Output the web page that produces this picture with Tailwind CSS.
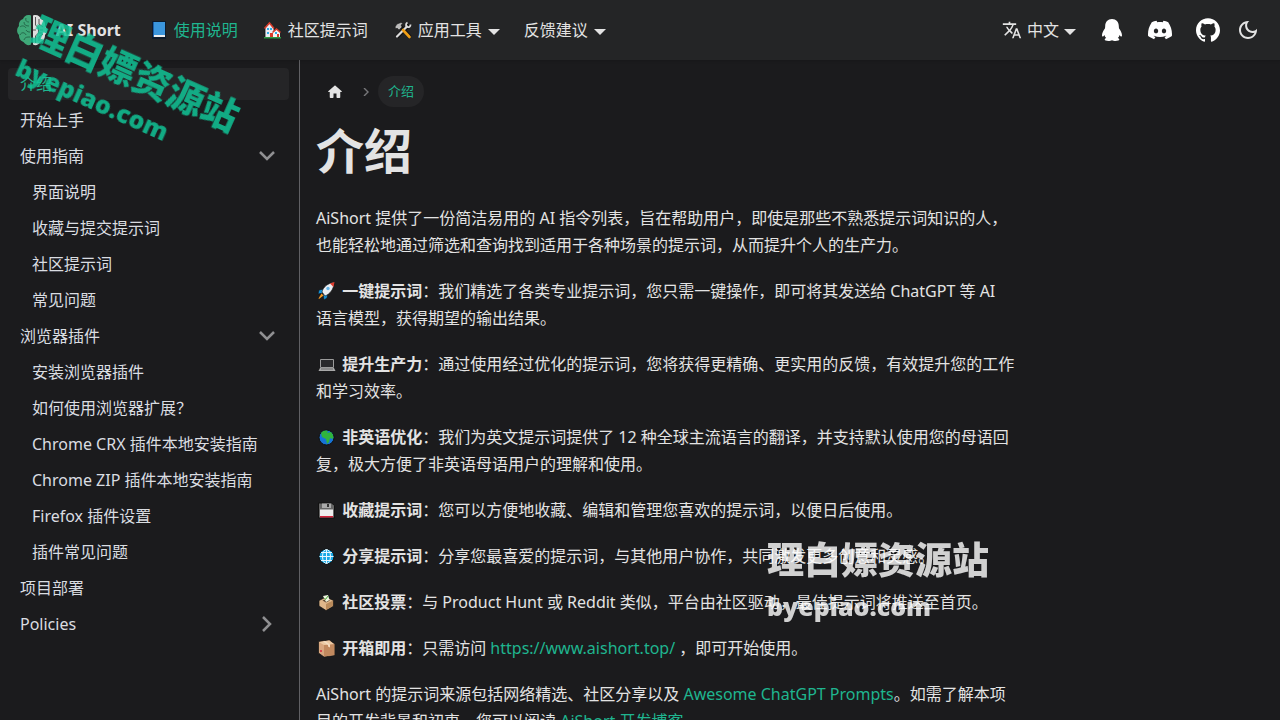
<!DOCTYPE html>
<html lang="zh-CN">
<head>
<meta charset="utf-8" />
<meta name="viewport" content="width=device-width, initial-scale=1" />
<title>介绍 | AI Short</title>
<script src="https://cdn.jsdelivr.net/npm/@tailwindcss/browser@4"></script>
</head>
<body class="bg-[#1b1b1d] font-['Noto_Sans','Noto_Sans_CJK_SC',sans-serif] text-base text-[#e3e3e3]">

<!-- navbar -->
<nav class="sticky top-0 z-20 flex h-[60px] items-center justify-between bg-[#242526] px-4 shadow-sm">
  <div class="flex items-center">
    <a href="#" class="mr-[15px] flex items-center gap-2 font-bold">
      <svg class="size-8" viewBox="0 0 32 32" aria-hidden="true">
        <path fill="#3fa878" d="M15 1.500C11 0 8 2 7 5 4 6 2.500 9 3 12 .5 14 .5 19 3 21c0 4 2 6 4.500 7 2 3 5 4 7.500 2.500z"/>
        <path fill="none" stroke="#256a4b" d="M10 4c-1 3 1 4 3 4M4 13c2-2 5-1 6 1m-6 7c1-3 5-3 6 0m-2 5c1-3 3-3 6-3M8 8c0 3 2 4 5 4m-3 4c1 2 3 2 4 2"/>
        <path fill="#dedede" d="M17 1.500C21 0 24 2 25 5c3 1 4.500 4 4 7 2.500 2 2.500 7 0 9 0 4-2 6-4.500 7-2 3-5 4-7.500 2.500z"/>
        <path fill="none" stroke="#555" d="M19.500 3v8l3 3v5l-3 3v7M23 5v5l4 3m-1 6h-3m0 8v-4l4-3M17 16h3m7 0h-3"/>
      </svg>
      <span>AI Short</span>
    </a>
    <a href="#" class="flex items-center gap-1 px-3 text-[#1fb58f]">
      <svg class="h-5 w-[22px]" viewBox="0 0 22 20" aria-hidden="true">
        <path fill="#0c1a2b" d="M4 1h14v18H4z"/>
        <path fill="#1d5fa8" d="M5 2h2v15H5z"/>
        <path fill="#3b96dd" d="M6 2h11v13H6z"/>
        <path fill="#eee" d="M6 15h11v2H6z"/>
      </svg>
      使用说明
    </a>
    <a href="#" class="flex items-center gap-1 px-3">
      <svg class="h-5 w-[22px]" viewBox="0 0 22 20" aria-hidden="true">
        <path fill="#ececf2" stroke="#111" stroke-width=".8" d="M3 18V8l4-5.500L12 8v10z"/>
        <path fill="none" stroke="#d83b2a" stroke-width="1.600" d="m2.500 8.500 5-5.500 4.500 5.500"/>
        <path fill="#f4f4f6" d="M11 18v-6l3.500-3 3.500 3v6z"/>
        <path fill="none" stroke="#d83b2a" stroke-width="1.600" d="m10.500 12.500 4-3.500 4 3.500"/>
        <path fill="#2eaee8" d="M5 8h2v2H5zm3 0h2v2H8zm-3 4h2v2H5zm8 0h2v2h-2z"/>
        <path fill="#d83b2a" d="M8 13h3v5H8zm7 1h2v4h-2z"/>
        <path fill="#2c9a44" d="M2 17h17v1.500H2z"/>
      </svg>
      社区提示词
    </a>
    <button type="button" class="flex items-center px-3">
      <svg class="mr-1 h-5 w-[22px]" viewBox="0 0 22 20" aria-hidden="true">
        <path stroke="#111" stroke-width="4" d="m5 17 12-12M8 6l10 11"/>
        <path fill="#bbb" stroke="#111" stroke-width=".5" d="m3 7 2-3 4-1.500 2 1-2 1.500 1 2-3 3-2-2-1 1z"/>
        <path stroke="#dcdcdc" stroke-width="2.200" stroke-linecap="round" d="m5 16.500 10-10"/>
        <path fill="none" stroke="#dcdcdc" stroke-width="1.800" d="M15.500 2.500c-2 1-2 4 0 4.500 1.500.5 3-.5 3-2.500"/>
        <path stroke="#f2a016" stroke-width="2.600" stroke-linecap="round" d="m11 10 6.500 7"/>
      </svg>
      应用工具
      <span class="ml-[6px] mt-1 border-x-6 border-t-6 border-x-transparent border-t-[#e3e3e3]"></span>
    </button>
    <button type="button" class="flex items-center px-3">
      反馈建议
      <span class="ml-[6px] mt-1 border-x-6 border-t-6 border-x-transparent border-t-[#e3e3e3]"></span>
    </button>
  </div>

  <div class="flex items-center">
    <button type="button" class="mr-[26px] flex items-center">
      <svg class="mr-[5px] size-5" viewBox="0 0 24 24" fill="currentColor" aria-hidden="true"><path d="M12.870 15.070l-2.540-2.510.03-.03c1.740-1.940 2.980-4.170 3.710-6.530H17V4h-7V2H8v2H1v1.990h11.170C11.500 7.920 10.440 9.750 9 11.350 8.070 10.320 7.300 9.190 6.690 8h-2c.73 1.630 1.730 3.170 2.980 4.560l-5.090 5.020L4 19l5-5 3.110 3.110.76-2.040zM18.500 10h-2L12 22h2l1.120-3h4.750L21 22h2l-4.500-12zm-2.620 7l1.620-4.330L19.120 17h-3.240z"/></svg>
      中文
      <span class="ml-[5px] mt-1 border-x-6 border-t-6 border-x-transparent border-t-[#e3e3e3]"></span>
    </button>
    <div class="flex items-center gap-6 text-white">
      <a href="#" aria-label="QQ">
        <svg class="h-6 w-5" viewBox="0 0 20 24" fill="currentColor" aria-hidden="true"><path d="M10 1C5.800 1 3.200 4 3.200 8c0 .9-.1 1.600-.3 2.400C1.500 12.400 0 15 0 17.200c0 1 .4 1.500.8 1.400.6-.1 1.200-1 1.600-1.700.3 1.200.9 2.300 1.800 3.200-1 .3-1.500.9-1.500 1.500 0 1 1.700 1.400 3.700 1.400 1.500 0 2.900-.3 3.600-.8.700.5 2.100.8 3.600.8 2 0 3.700-.4 3.700-1.400 0-.6-.5-1.200-1.500-1.500.9-.9 1.500-2 1.800-3.200.4.700 1 1.600 1.600 1.700.4.100.8-.4.8-1.400 0-2.200-1.500-4.800-2.900-6.800-.2-.8-.3-1.500-.3-2.400 0-4-2.600-7-6.800-7z"/></svg>
      </a>
      <a href="#" aria-label="Discord" class="ml-[2px]">
        <svg class="size-6" viewBox="0 0 24 24" fill="currentColor" aria-hidden="true"><path d="M20.317 4.370a19.791 19.791 0 00-4.885-1.515.074.074 0 00-.079.037c-.211.375-.445.865-.608 1.249-1.845-.276-3.680-.276-5.487 0-.164-.393-.406-.874-.618-1.249a.077.077 0 00-.079-.037 19.736 19.736 0 00-4.885 1.515.070.070 0 00-.032.028C.533 9.046-.319 13.580.099 18.058a.082.082 0 00.031.056c2.053 1.508 4.041 2.423 5.993 3.029a.078.078 0 00.084-.028c.462-.630.873-1.295 1.226-1.994a.076.076 0 00-.042-.106c-.653-.248-1.274-.549-1.872-.892a.077.077 0 01-.008-.128c.126-.094.252-.192.372-.291a.074.074 0 01.078-.010c3.928 1.793 8.180 1.793 12.061 0a.074.074 0 01.079.009c.120.099.246.198.373.292a.077.077 0 01-.007.128 12.299 12.299 0 01-1.873.891.077.077 0 00-.041.107c.360.698.772 1.363 1.225 1.993a.076.076 0 00.084.029c1.961-.607 3.950-1.522 6.002-3.029a.077.077 0 00.031-.055c.500-5.177-.838-9.674-3.549-13.660a.061.061 0 00-.031-.029zM8.020 15.331c-1.183 0-2.157-1.086-2.157-2.419 0-1.333.956-2.419 2.157-2.419 1.211 0 2.176 1.095 2.157 2.419 0 1.333-.956 2.419-2.157 2.419zm7.975 0c-1.183 0-2.157-1.086-2.157-2.419 0-1.333.955-2.419 2.157-2.419 1.211 0 2.176 1.095 2.157 2.419 0 1.333-.946 2.419-2.157 2.419z"/></svg>
      </a>
      <a href="#" aria-label="GitHub">
        <svg class="size-6" viewBox="0 0 24 24" fill="currentColor" aria-hidden="true"><path d="M12 .297c-6.630 0-12 5.373-12 12 0 5.303 3.438 9.800 8.205 11.385.6.113.82-.258.82-.577 0-.285-.01-1.040-.015-2.040-3.338.724-4.042-1.610-4.042-1.610C4.422 18.070 3.633 17.700 3.633 17.700c-1.087-.744.084-.729.084-.729 1.205.084 1.838 1.236 1.838 1.236 1.070 1.835 2.809 1.305 3.495.998.108-.776.417-1.305.76-1.605-2.665-.3-5.466-1.332-5.466-5.930 0-1.310.465-2.380 1.235-3.220-.135-.303-.54-1.523.105-3.176 0 0 1.005-.322 3.300 1.230.96-.267 1.980-.399 3-.405 1.020.006 2.040.138 3 .405 2.280-1.552 3.285-1.230 3.285-1.230.645 1.653.24 2.873.12 3.176.765.84 1.230 1.910 1.230 3.220 0 4.610-2.805 5.625-5.475 5.920.42.36.81 1.096.81 2.220 0 1.606-.015 2.896-.015 3.286 0 .315.21.69.825.57C20.565 22.092 24 17.592 24 12.297c0-6.627-5.373-12-12-12"/></svg>
      </a>
    </div>
    <button type="button" aria-label="切换浅色/暗黑模式" class="ml-4 mr-1">
      <svg class="size-6" viewBox="0 0 24 24" fill="currentColor" aria-hidden="true"><path d="M9.370,5.510C9.190,6.150,9.100,6.820,9.100,7.500c0,4.080,3.320,7.400,7.400,7.400c0.680,0,1.350-0.090,1.990-0.270C17.450,17.190,14.930,19,12,19 c-3.860,0-7-3.140-7-7C5,9.070,6.810,6.550,9.370,5.510z M12,3c-4.970,0-9,4.030-9,9s4.030,9,9,9s9-4.030,9-9c0-0.460-0.040-0.920-0.100-1.360 c-0.980,1.370-2.580,2.260-4.400,2.260c-2.980,0-5.400-2.420-5.400-5.400c0-1.810,0.890-3.420,2.260-4.400C12.920,3.040,12.460,3,12,3L12,3z"/></svg>
    </button>
  </div>
</nav>

<div class="flex">
  <!-- sidebar -->
  <aside class="sticky top-[60px] h-[calc(100vh-60px)] w-[300px] shrink-0 border-r border-[#606064] py-2 pl-2 pr-[10px] leading-5 text-[#dadde1]">
    <ul class="flex flex-col gap-1">
      <li><a href="#" class="block rounded bg-[#252527] px-3 py-[6px] text-[#1fb58f]">介绍</a></li>
      <li><a href="#" class="block px-3 py-[6px]">开始上手</a></li>
      <li>
        <button type="button" class="flex w-full items-center justify-between px-3 py-[6px]">使用指南
          <svg class="size-5" viewBox="0 0 20 20" fill="none" stroke="#909092" stroke-width="2.500" aria-hidden="true"><path d="m3 6 7 7 7-7"/></svg>
        </button>
      </li>
      <li><a href="#" class="block px-6 py-[6px]">界面说明</a></li>
      <li><a href="#" class="block px-6 py-[6px]">收藏与提交提示词</a></li>
      <li><a href="#" class="block px-6 py-[6px]">社区提示词</a></li>
      <li><a href="#" class="block px-6 py-[6px]">常见问题</a></li>
      <li>
        <button type="button" class="flex w-full items-center justify-between px-3 py-[6px]">浏览器插件
          <svg class="size-5" viewBox="0 0 20 20" fill="none" stroke="#909092" stroke-width="2.500" aria-hidden="true"><path d="m3 6 7 7 7-7"/></svg>
        </button>
      </li>
      <li><a href="#" class="block px-6 py-[6px]">安装浏览器插件</a></li>
      <li><a href="#" class="block px-6 py-[6px]">如何使用浏览器扩展？</a></li>
      <li><a href="#" class="block px-6 py-[6px]">Chrome CRX 插件本地安装指南</a></li>
      <li><a href="#" class="block px-6 py-[6px]">Chrome ZIP 插件本地安装指南</a></li>
      <li><a href="#" class="block px-6 py-[6px]">Firefox 插件设置</a></li>
      <li><a href="#" class="block px-6 py-[6px]">插件常见问题</a></li>
      <li><a href="#" class="block px-3 py-[6px]">项目部署</a></li>
      <li>
        <button type="button" class="flex w-full items-center justify-between px-3 py-[6px]">Policies
          <svg class="size-5" viewBox="0 0 20 20" fill="none" stroke="#909092" stroke-width="2.500" aria-hidden="true"><path d="m6 3 7 7-7 7"/></svg>
        </button>
      </li>
    </ul>
  </aside>

  <!-- article -->
  <main class="min-w-0 flex-1 px-4 pt-4">
    <article class="max-w-[700px]">
      <div class="flex h-[31px] items-center text-[13px]">
        <a href="#" aria-label="主页面" class="px-[10px]">
          <svg class="size-[18px]" viewBox="0 0 24 24" fill="currentColor" aria-hidden="true"><path d="M10 19v-5h4v5c0 .55.45 1 1 1h3c.55 0 1-.45 1-1v-7h1.700c.46 0 .68-.57.33-.87L12.670 3.600c-.38-.34-.96-.34-1.340 0l-8.360 7.530c-.34.3-.13.87.33.87H5v7c0 .55.45 1 1 1h3c.55 0 1-.45 1-1z"/></svg>
        </a>
        <svg class="mx-2 size-2" viewBox="0 0 8 8" fill="none" stroke="#77777a" stroke-width="1.400" aria-hidden="true"><path d="m2 0 4 4-4 4"/></svg>
        <span class="rounded-full bg-[#252527] px-[10px] leading-[31px] text-[#1fb58f]">介绍</span>
      </div>
      <h1 class="mb-6 mt-[14px] text-5xl font-bold leading-[60px]">介绍</h1>

      <div class="flex flex-col gap-[19px] leading-[27px]">
        <p>AiShort 提供了一份简洁易用的 AI 指令列表，旨在帮助用户，即使是那些不熟悉提示词知识的人，也能轻松地通过筛选和查询找到适用于各种场景的提示词，从而提升个人的生产力。</p>
        <p>
          <svg class="inline h-5 w-[22px] align-[-4px]" viewBox="0 0 22 20" aria-hidden="true">
            <path fill="#1591d8" stroke="#111" stroke-width=".6" d="m8 8-5 1-1 4 5-1zm4 4-1 5-3 2-1-6z"/>
            <path fill="#e9edf2" stroke="#111" stroke-width=".6" d="M6 11c1-5 6-9 12-9.500C18 8 14 13 9 15z"/>
            <path fill="#e03b2d" d="M14 2.500 18.500 1l-1 5z"/>
            <circle cx="12" cy="7.500" r="1.700" fill="#66b5e8"/>
            <path fill="#f59a23" d="m5.500 12.500 2 2L3 18l-.5-.5z"/>
          </svg>
          <strong>一键提示词</strong>：我们精选了各类专业提示词，您只需一键操作，即可将其发送给 ChatGPT 等 AI<br />语言模型，获得期望的输出结果。
        </p>
        <p>
          <svg class="inline h-5 w-[22px] align-[-4px]" viewBox="0 0 22 20" aria-hidden="true">
            <path fill="#2a2a2c" stroke="#9b9b9b" d="M4.500 5.500h13v8h-13z"/>
            <path fill="#a9a9a9" d="M4 14h14l1.500 3h-17z"/>
            <path fill="#6d6d6d" d="M5 14.500h12v1H5z"/>
          </svg>
          <strong>提升生产力</strong>：通过使用经过优化的提示词，您将获得更精确、更实用的反馈，有效提升您的工作和学习效率。
        </p>
        <p>
          <svg class="inline h-5 w-[22px] align-[-4px]" viewBox="0 0 22 20" aria-hidden="true">
            <circle cx="10.500" cy="10.500" r="7.500" fill="#1673d6" stroke="#111"/>
            <path fill="#30b53c" d="M5 6c2-3 5-3 7-2l-1 2 4-1c2 2 3 5 2 7l-3-1-1 4-2 2-1-5-4-2z"/>
          </svg>
          <strong>非英语优化</strong>：我们为英文提示词提供了 12 种全球主流语言的翻译，并支持默认使用您的母语回复，极大方便了非英语母语用户的理解和使用。
        </p>
        <p>
          <svg class="inline h-5 w-[22px] align-[-4px]" viewBox="0 0 22 20" aria-hidden="true">
            <path fill="#666" stroke="#111" d="M2.500 3h13l3 2.500V18h-16z"/>
            <path fill="#aaa" d="M6 3.500h9V8H6z"/>
            <path fill="#333" d="M11 4h2v3h-2z"/>
            <path fill="#eee" d="M4 9.500h13V17H4z"/>
            <path fill="#d2223a" d="M4 16h13v1.500H4z"/>
          </svg>
          <strong>收藏提示词</strong>：您可以方便地收藏、编辑和管理您喜欢的提示词，以便日后使用。
        </p>
        <p>
          <svg class="inline h-5 w-[22px] align-[-4px]" viewBox="0 0 22 20" aria-hidden="true">
            <circle cx="10.500" cy="10.500" r="7.500" fill="#18a9e6" stroke="#111"/>
            <path fill="none" stroke="#e6f7ff" d="M3.500 10.500h14M5 6.500h11M5 14.500h11M10.500 3.500v14"/>
            <ellipse cx="10.500" cy="10.500" rx="4" ry="7" fill="none" stroke="#e6f7ff"/>
          </svg>
          <strong>分享提示词</strong>：分享您最喜爱的提示词，与其他用户协作，共同激发更多创意和灵感。
        </p>
        <p>
          <svg class="inline h-5 w-[22px] align-[-4px]" viewBox="0 0 22 20" aria-hidden="true">
            <path fill="#dfb78b" stroke="#111" stroke-width=".7" d="m10 5 7.500 3.500V14L10 18.500 3 14V8.500z"/>
            <path fill="#b98b5c" d="m10 12 7-3.500V14l-7 4z"/>
            <path fill="#5c4530" d="m6.500 8.500 3.500-1.500 4 1.500-4 2z"/>
            <path fill="#eef5df" d="m7 4 5-1 1.500 5L10 10z"/>
            <path fill="none" stroke="#4ca638" d="m8.500 6 1 1.500L12 4"/>
          </svg>
          <strong>社区投票</strong>：与 Product Hunt 或 Reddit 类似，平台由社区驱动，最佳提示词将推送至首页。
        </p>
        <p>
          <svg class="inline h-5 w-[22px] align-[-4px]" viewBox="0 0 22 20" aria-hidden="true">
            <path fill="#d8a780" stroke="#111" stroke-width=".7" d="m2.500 3.500 11-1.500 5 4v11.500L8 19l-5.500-4z"/>
            <path fill="#c1895f" d="m8 7 10.500-1v11L8 18.500z"/>
            <path fill="#eccaa5" d="m3 4 10-1.500L18 6 8 7z"/>
            <path fill="#f3dcc1" d="m7 3.500 2-.5 5 3.500v3l-2-1V7z"/>
            <path fill="#d64550" d="M4 12h2v2H4z"/>
          </svg>
          <strong>开箱即用</strong>：只需访问 <a href="#" class="text-[#1fb58f]">https://www.aishort.top/</a> ，即可开始使用。
        </p>
        <p>AiShort 的提示词来源包括网络精选、社区分享以及 <a href="#" class="text-[#1fb58f]">Awesome ChatGPT Prompts</a>。如需了解本项目的开发背景和初衷，您可以阅读 <a href="#" class="text-[#1fb58f]">AiShort 开发博客</a>。</p>
      </div>
    </article>
  </main>
</div>

<!-- watermarks -->
<div class="pointer-events-none fixed left-[43px] top-[9px] z-30 origin-top-left rotate-24 whitespace-nowrap font-['Open_Sans','Noto_Sans_CJK_SC',sans-serif] font-black text-[#0fc395]/85">
  <p class="text-[37px] leading-[44px]">理白嫖资源站</p>
  <p class="text-[25px] leading-[36px]">byepiao.com</p>
</div>
<div class="pointer-events-none fixed left-[767px] top-[538px] z-30 whitespace-nowrap font-['Open_Sans','Noto_Sans_CJK_SC',sans-serif] font-black text-white/80">
  <p class="text-[37px] leading-[44px]">理白嫖资源站</p>
  <p class="text-[25px] leading-[48px]">byepiao.com</p>
</div>

</body>
</html>
